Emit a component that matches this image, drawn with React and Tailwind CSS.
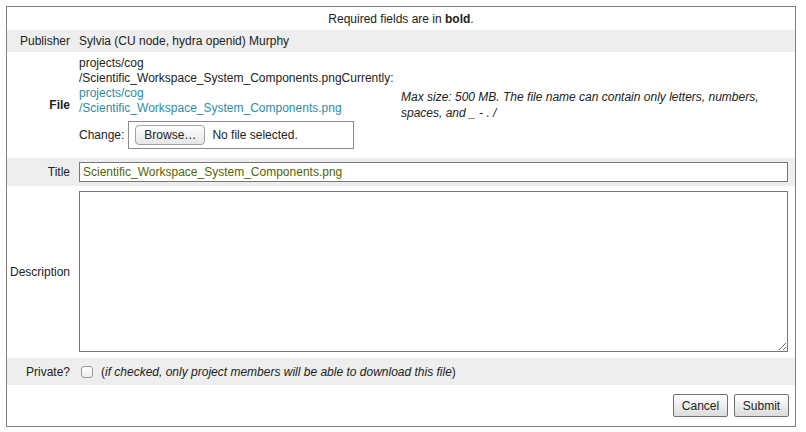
import React from "react";

function Label({ children, bold }) {
  return (
    <div className={"flex items-center justify-end pr-[3px] " + (bold ? "font-bold" : "")}>
      {children}
    </div>
  );
}

export default function App() {
  const cols = "grid grid-cols-[66px_322px_1fr]";

  return (
    <div className="bg-white w-[806px] h-[432px] pt-[6px] px-[6px] font-['Liberation_Sans',Arial,sans-serif] text-[12px] text-[#222]">
      <div className="border border-[#808080] w-[790px]">
        {/* Required note */}
        <div className="h-[23px] flex items-center justify-center">
          <span>
            Required fields are in <b>bold</b>.
          </span>
        </div>

        {/* Publisher */}
        <div className={cols + " h-[22px] bg-[#eeeeee]"}>
          <Label>Publisher</Label>
          <div className="col-span-2 flex items-center pl-[6px]">
            Sylvia (CU node, hydra openid) Murphy
          </div>
        </div>

        {/* File */}
        <div className={cols + " h-[106px]"}>
          <Label bold>File</Label>
          <div className="pl-[6px] pt-[4px] flex flex-col">
            <div className="leading-[15px]">
              <div>projects/cog</div>
              <div>/Scientific_Workspace_System_Components.pngCurrently:</div>
              <div className="text-[#2e8ca3]">projects/cog</div>
              <div className="text-[#2e8ca3]">/Scientific_Workspace_System_Components.png</div>
            </div>
            <div className="mt-[5px] flex items-center gap-[4px]">
              <span>Change:</span>
              <div className="w-[226px] h-[28px] border border-[#8a8a8a] bg-white flex items-center pl-[6px] gap-[7px]">
                <span className="h-[20px] w-[70px] rounded-[4px] border border-[#a0a0a0] bg-gradient-to-b from-white to-[#e6e6e6] flex items-center justify-center text-[12px]">
                  Browse…
                </span>
                <span>No file selected.</span>
              </div>
            </div>
          </div>
          <div className="flex items-center pl-[6px] pr-[7px] italic leading-[16px]">
            Max size: 500 MB. The file name can contain only letters, numbers, spaces, and _ - . /
          </div>
        </div>

        {/* Title */}
        <div className={cols + " h-[28px] bg-[#eeeeee]"}>
          <Label>Title</Label>
          <div className="col-span-2 flex items-center pl-[6px] pr-[7px]">
            <input
              type="text"
              defaultValue="Scientific_Workspace_System_Components.png"
              className="w-full h-[20px] border border-[#777777] bg-white px-[3px] text-[12px] text-[#556300] outline-none font-['Liberation_Sans',Arial,sans-serif]"
            />
          </div>
        </div>

        {/* Description */}
        <div className={cols + " h-[172px]"}>
          <Label>Description</Label>
          <div className="col-span-2 pl-[6px] pr-[7px] pt-[5px]">
            <textarea className="block w-full h-[161px] border border-[#777777] bg-white outline-none" />
          </div>
        </div>

        {/* Private */}
        <div className={cols + " h-[27px] bg-[#eeeeee]"}>
          <Label>Private?</Label>
          <div className="col-span-2 flex items-center pl-[8px]">
            <span className="w-[12px] h-[12px] rounded-[3px] border border-[#9a9a9a] bg-gradient-to-b from-white to-[#ececec]" />
            <span className="ml-[8px]">
              (<i>if checked, only project members will be able to download this file</i>)
            </span>
          </div>
        </div>

        {/* Buttons */}
        <div className="h-[41px] flex justify-end items-start pt-[9px] pr-[6px] gap-[6px]">
          <button className="w-[55px] h-[23px] border border-[#6f6f6f] rounded-[2px] bg-gradient-to-b from-white to-[#dcdcdc] text-[12px] text-[#222]">
            Cancel
          </button>
          <button className="w-[55px] h-[23px] border border-[#6f6f6f] rounded-[2px] bg-gradient-to-b from-white to-[#dcdcdc] text-[12px] text-[#222]">
            Submit
          </button>
        </div>
      </div>
    </div>
  );
}
